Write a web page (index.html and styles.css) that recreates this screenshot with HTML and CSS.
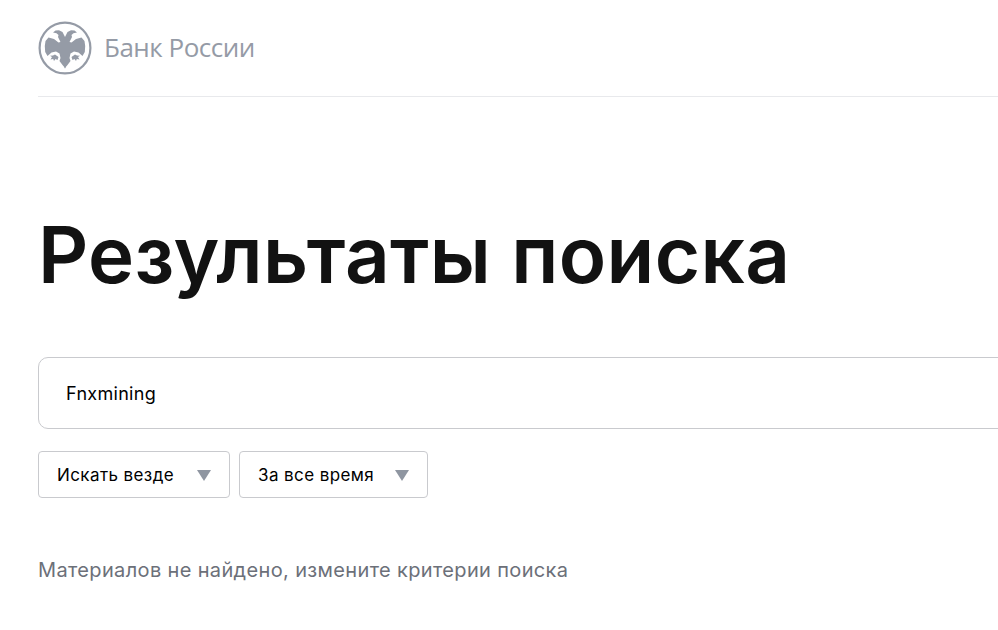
FILE: index.html
```html
<!DOCTYPE html>
<html lang="ru">
<head>
  <meta charset="UTF-8" />
  <title>Результаты поиска - Банк России</title>
  <link rel="stylesheet" href="styles.css">
</head>
<body>
  <header class="header">
    <div class="logo">
      <svg class="logo-icon" viewBox="0 0 54 54" width="54" height="54" aria-hidden="true">
        <circle cx="27" cy="27" r="25.4" fill="none" stroke="#959ba6" stroke-width="2.2"/>
        <g fill="#959ba6">
          <path d="M27.500 17C26.500 15 25.500 13 24.500 11L21 9.200 17.500 9.500 15 11.500 18.500 12.200 20.500 14 20 16 22.500 21 20.500 21.500 16 18 10.500 16.500 7.500 20 6.800 25 7.200 31 9.500 35 13.500 31.500 18 30.500 21.500 32.500 22.500 37 21.500 40 24.500 44 27.500 47.500z"/>
          <path d="M17 33.500l3.500 2.500-1 3-2-1-1.500 2-.8-2-2.700.5 1.500-2.500-2-1.300 3-.2z"/>
        </g>
        <g fill="#959ba6" transform="matrix(-1 0 0 1 54 0)">
          <path d="M27.500 17C26.500 15 25.500 13 24.500 11L21 9.200 17.500 9.500 15 11.500 18.500 12.200 20.500 14 20 16 22.500 21 20.500 21.500 16 18 10.500 16.500 7.500 20 6.800 25 7.200 31 9.500 35 13.500 31.500 18 30.500 21.500 32.500 22.500 37 21.500 40 24.500 44 27.500 47.500z"/>
          <path d="M17 33.500l3.500 2.500-1 3-2-1-1.500 2-.8-2-2.700.5 1.500-2.500-2-1.300 3-.2z"/>
        </g>
      </svg>
      <span class="logo-text">Банк России</span>
    </div>
  </header>

  <main class="content">
    <h1>Результаты поиска</h1>
    <div class="search-box">Fnxmining</div>
    <div class="filters">
      <div class="select select-where">
        <span>Искать везде</span>
        <i class="arrow"></i>
      </div>
      <div class="select select-when">
        <span>За все время</span>
        <i class="arrow"></i>
      </div>
    </div>
    <p class="empty">Материалов не найдено, измените критерии поиска</p>
  </main>
</body>
</html>
```

FILE: styles.css
```css
html, body {
  margin: 0;
  padding: 0;
  overflow: hidden;
}
body {
  font-family: 'Inter', 'Noto Sans', sans-serif;
  background: #fff;
  color: #000;
  height: 630px;
  padding-left: 38px;
}
.header {
  height: 96px;
  border-bottom: 1px solid #e8e9ec;
  display: flex;
  align-items: flex-start;
}
.logo {
  display: flex;
  align-items: center;
  gap: 12px;
  margin-top: 21px;
}
.logo-icon {
  display: block;
}
.logo-text {
  font-family: 'Open Sans', sans-serif;
  font-size: 26px;
  color: #959ba6;
  letter-spacing: -0.5px;
  padding-bottom: 2px;
}
.content {
  width: 1000px;
}
h1 {
  margin: 110px 0 0;
  font-size: 78px;
  line-height: 96px;
  font-weight: 600;
  color: #121212;
  letter-spacing: 0.35px;
}
.search-box {
  margin-top: 54px;
  height: 70px;
  line-height: 72px;
  padding-left: 27px;
  border: 1px solid #c9cace;
  border-radius: 10px;
  font-size: 18px;
  letter-spacing: 0.3px;
}
.filters {
  display: flex;
  gap: 9px;
  margin-top: 22px;
}
.select {
  box-sizing: border-box;
  height: 47px;
  border: 1px solid #c9cace;
  border-radius: 4px;
  display: flex;
  align-items: center;
  justify-content: space-between;
  padding: 0 18px;
  font-size: 17px;
  letter-spacing: 0.4px;
}
.select-where {
  width: 192px;
}
.select-when {
  width: 189px;
}
.arrow {
  width: 0;
  height: 0;
  border-left: 7px solid transparent;
  border-right: 7px solid transparent;
  border-top: 11px solid #8f96a1;
  margin-top: 2px;
}
.empty {
  margin: 59px 0 0;
  font-size: 20px;
  line-height: 26px;
  color: #6c7079;
  letter-spacing: 0.35px;
}
```
